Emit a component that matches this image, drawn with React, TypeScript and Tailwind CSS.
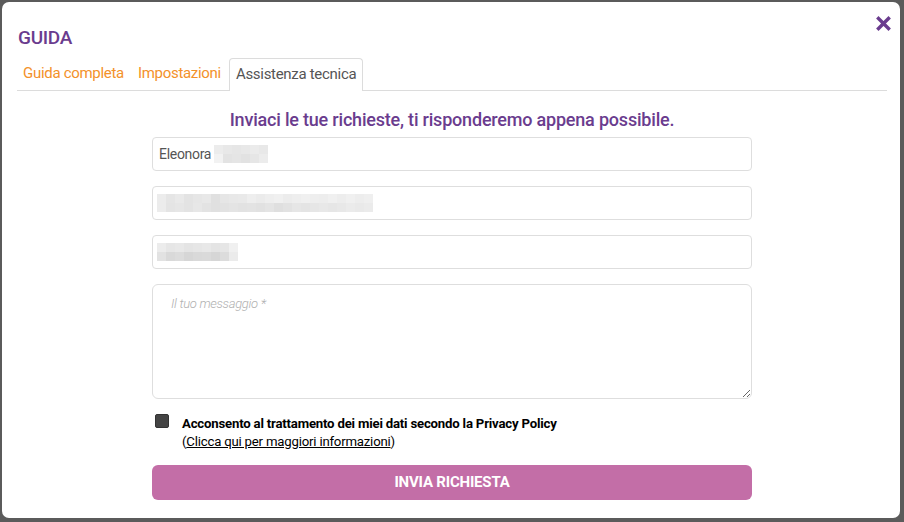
import React from "react";

const Blur = ({ cells }: { cells: string[][] }) => (
  <div className="flex flex-col">
    {cells.map((row, i) => (
      <div key={i} className="flex">
        {row.map((c, j) => (
          <div key={j} className="w-[9px] h-[9px]" style={{ background: c }} />
        ))}
      </div>
    ))}
  </div>
);

const nameBlur = [
  ["#ececec", "#e8e8e8", "#e6e6e6", "#e8e8e8", "#ebebeb", "#e8e8e8"],
  ["#f2f2f2", "#e3e3e3", "#e5e5e5", "#e2e2e2", "#e6e6e6", "#ececec"],
];
const mailBlur = [
  ["#ececec", "#e5e5e5", "#e9e9e9", "#e3e3e3", "#e6e6e6", "#e8e8e8", "#e0e0e0", "#e6e6e6", "#e8e8e8", "#e9e9e9", "#eeeeee", "#ebebeb", "#eeeeee", "#f0f0f0", "#ececec", "#eeeeee", "#f0f0f0", "#eeeeee", "#ededed", "#f0f0f0", "#ededed", "#f0f0f0", "#ededed", "#efefef"],
  ["#ececec", "#e4e4e4", "#e6e6e6", "#e3e3e3", "#e7e7e7", "#e3e3e3", "#e0e0e0", "#e2e2e2", "#e4e4e4", "#e2e2e2", "#e3e3e3", "#e1e1e1", "#e4e4e4", "#dfdfdf", "#e2e2e2", "#e6e6e6", "#e4e4e4", "#e6e6e6", "#e8e8e8", "#e6e6e6", "#e8e8e8", "#ebebeb", "#e9e9e9", "#ebebeb"],
];
const phoneBlur = [
  ["#ececec", "#e6e6e6", "#e8e8e8", "#e4e4e4", "#e6e6e6", "#e8e8e8", "#e4e4e4", "#e6e6e6", "#f0f0f0"],
  ["#e2e2e2", "#d9d9d9", "#dcdcdc", "#d6d6d6", "#d9d9d9", "#dadada", "#d6d6d6", "#dcdcdc", "#ebebeb"],
];

export default function App() {
  return (
    <div className="w-[904px] h-[522px] bg-[#5b5b5b] pt-[2px] pl-[2px] font-['Roboto',sans-serif]">
      <div className="w-[898px] h-[516px] bg-white rounded-[7px] pl-[15px] pr-[13px] relative">
        <button className="absolute right-[9px] top-[14px] text-[#6a3c8e]">
          <svg width="15" height="15" viewBox="0 0 15 15">
            <path d="M2.5 2.5 L12.5 12.5 M12.5 2.5 L2.5 12.5" stroke="currentColor" strokeWidth="3.4" strokeLinecap="square" />
          </svg>
        </button>

        <h1 className="pt-[24px] pl-[1px] text-[19px] leading-[24px] font-medium text-[#6a3c8e] tracking-[-0.3px]">GUIDA</h1>

        <div className="mt-[8px] flex items-end border-b border-[#dcdcdc] h-[33px] text-[15px] tracking-[-0.3px]">
          <div className="px-[6px] h-[32px] leading-[31px] text-[#f3912a]">Guida completa</div>
          <div className="px-[7px] h-[32px] leading-[31px] text-[#f3912a] ml-[1px]">Impostazioni</div>
          <div className="px-[6px] h-[33px] leading-[31px] text-[#555555] border border-b-0 border-[#dcdcdc] rounded-t-[4px] bg-white -mb-px ml-[1px]">
            Assistenza tecnica
          </div>
        </div>

        <div className="w-[600px] mx-auto">
          <p className="mt-[17px] text-center text-[18px] leading-[24px] font-medium text-[#6a3c8e] tracking-[-0.2px]">
            Inviaci le tue richieste, ti risponderemo appena possibile.
          </p>

          <div className="mt-[5px] flex flex-col gap-[15px]">
            <div className="h-[34px] border border-[#dedede] rounded-[4px] flex items-center px-[6px] text-[14px] text-[#555555] tracking-[-0.3px]">
              <span>Eleonora</span>
              <div className="ml-[3px]">
                <Blur cells={nameBlur} />
              </div>
            </div>
            <div className="h-[34px] border border-[#dedede] rounded-[4px] flex items-center px-[4px]">
              <Blur cells={mailBlur} />
            </div>
            <div className="h-[34px] border border-[#dedede] rounded-[4px] flex items-center px-[4px]">
              <Blur cells={phoneBlur} />
            </div>
          </div>

          <textarea
            className="mt-[15px] block w-full h-[115px] border border-[#dedede] rounded-[6px] px-[18px] py-[9px] text-[13px] italic font-light text-[#555] placeholder:text-[#b0b0b0] resize-y outline-none tracking-[-0.3px]"
            placeholder="Il tuo messaggio *"
          />

          <div className="mt-[14px] flex items-start">
            <div className="ml-[3px] mt-[1px] w-[14px] h-[14px] rounded-[2px] bg-[#444444] border border-[#333]" />
            <div className="ml-[13px] mt-[2px] text-[13.2px] leading-[18px] text-black tracking-[-0.2px]">
              <p className="font-bold">Acconsento al trattamento dei miei dati secondo la Privacy Policy</p>
              <p>
                (<a className="underline">Clicca qui per maggiori informazioni</a>)
              </p>
            </div>
          </div>

          <button className="mt-[14px] w-full h-[35px] rounded-[6px] bg-[#c36ea7] text-white text-[15px] font-bold tracking-[-0.2px]">
            INVIA RICHIESTA
          </button>
        </div>
      </div>
    </div>
  );
}
